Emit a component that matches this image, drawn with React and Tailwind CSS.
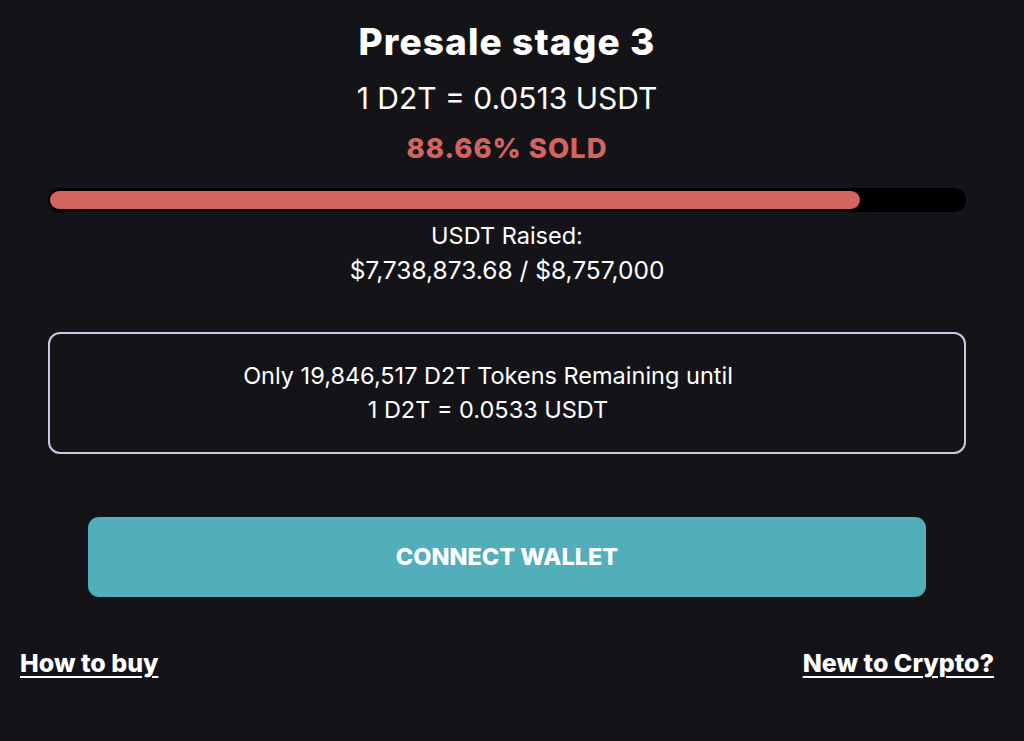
import React from 'react';

const App = () => {
    const sold = 88.66;

    return (
        <div className="min-h-screen bg-[#141418] text-white" style={{ fontFamily: 'Inter, "Noto Sans", sans-serif' }}>
            <div className="w-[1014px] pt-[18px]">
                {/* Stage header */}
                <div className="flex flex-col items-center">
                    <h1 className="text-[37px] leading-[48px] font-extrabold tracking-[0.03em]">Presale stage 3</h1>
                    <p className="mt-[12px] text-[30px] leading-[40px]">1 D2T = 0.0513 USDT</p>
                    <p className="mt-[12px] text-[27.5px] leading-[36px] font-extrabold tracking-[0.035em] text-[#d4645f]">88.66% SOLD</p>
                </div>

                {/* Progress */}
                <div className="mx-[48px] mt-[22px] h-[24px] rounded-full bg-black py-[3px] px-[2px]">
                    <div className="h-full rounded-full bg-[#d4645f]" style={{ width: `${sold}%` }} />
                </div>

                <div className="mt-[8px] flex flex-col items-center">
                    <p className="text-[23.5px] leading-[32px]">USDT Raised:</p>
                    <p className="text-[24.5px] leading-[36px]">$7,738,873.68 / $8,757,000</p>
                </div>

                {/* Remaining box */}
                <div className="mx-[48px] mt-[44px] h-[122px] rounded-[12px] border-2 border-[#c9cbe6] pr-[38px] flex flex-col items-center justify-center">
                    <p className="text-[23.5px] leading-[34px]">Only 19,846,517 D2T Tokens Remaining until</p>
                    <p className="text-[23.5px] leading-[34px]">1 D2T = 0.0533 USDT</p>
                </div>

                <div className="mx-[88px] mt-[63px]">
                    <button className="w-full h-[80px] rounded-[11px] bg-[#52aebb] text-[23.5px] font-extrabold">
                        CONNECT WALLET
                    </button>
                </div>

                <div className="mt-[49px] px-[20px] flex justify-between">
                    <a href="#" className="text-[25px] leading-[34px] font-extrabold underline decoration-2 underline-offset-[4px]">How to buy</a>
                    <a href="#" className="text-[25px] leading-[34px] font-extrabold underline decoration-2 underline-offset-[4px]">New to Crypto?</a>
                </div>
            </div>
        </div>
    );
};

export default App;
